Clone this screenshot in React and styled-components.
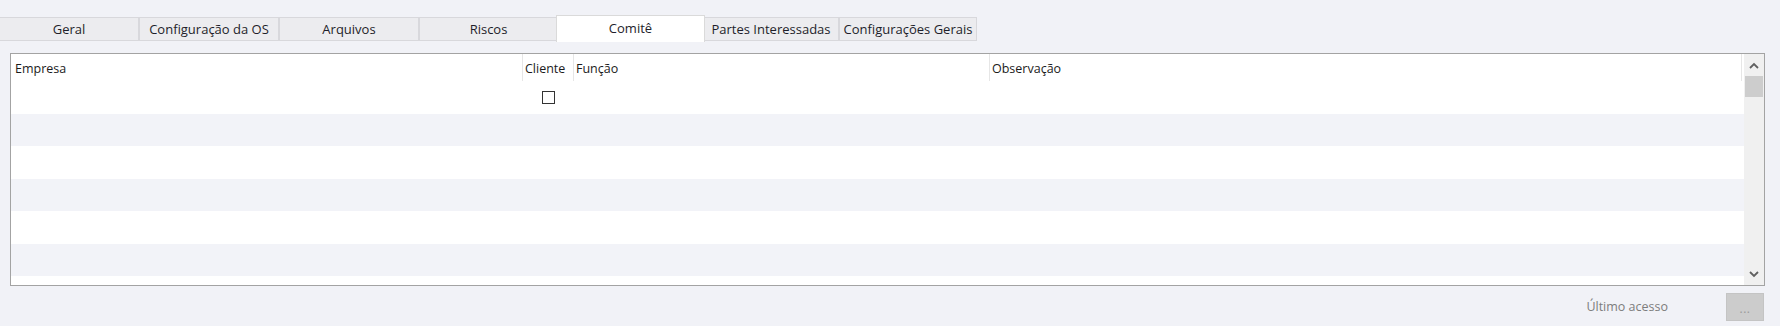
import styled, { createGlobalStyle } from "styled-components";

const GlobalStyle = createGlobalStyle`
	body {
		margin: 0;
		background: #f1f2f7;
		font-family: "Open Sans", "Noto Sans", sans-serif;
	}
`;

const Screen = styled.div`
	width: 1780px;
	height: 326px;
	display: flex;
	flex-direction: column;
	background: #f1f2f7;
	overflow: hidden;
`;

const TabStrip = styled.div`
	display: flex;
	align-items: flex-end;
	height: 41px;
	position: relative;
	z-index: 1;
`;

const Tab = styled.div`
	box-sizing: border-box;
	width: ${(p) => p.$width}px;
	height: ${(p) => (p.$active ? "27px" : "24px")};
	margin-bottom: ${(p) => (p.$active ? "-1px" : "0")};
	margin-left: ${(p) => (p.$active ? "-2px" : "0")};
	margin-right: ${(p) => (p.$active ? "-2px" : "0")};
	display: flex;
	align-items: center;
	justify-content: center;
	padding-bottom: ${(p) => (p.$active ? "3px" : "0")};
	background: ${(p) => (p.$active ? "#ffffff" : "#ececef")};
	border: 1px solid ${(p) => (p.$active ? "#dadada" : "#d8d8dc")};
	border-bottom: ${(p) => (p.$active ? "none" : "1px solid #d8d8dc")};
	border-left: ${(p) => (p.$first ? "none" : undefined)};
	font-size: 13px;
	color: #1e1e2a;
	white-space: nowrap;
	position: relative;
	z-index: ${(p) => (p.$active ? 2 : 1)};
`;

const TabPage = styled.div`
	flex: 1;
	display: flex;
	flex-direction: column;
	padding: 12px 15px 0 10px;
`;

const Grid = styled.div`
	box-sizing: border-box;
	height: 233px;
	display: flex;
	border: 1px solid #a3a3a3;
	background: #ffffff;
`;

const GridBody = styled.div`
	flex: 1;
	display: flex;
	flex-direction: column;
	overflow: hidden;
`;

const Columns = "511px 51px 416px 1fr";

const HeaderRow = styled.div`
	display: grid;
	grid-template-columns: ${Columns};
	height: 27px;
	flex-shrink: 0;
	background: #ffffff;
`;

const HeaderCell = styled.div`
	display: flex;
	align-items: center;
	padding-left: ${(p) => (p.$first ? "4px" : "2px")};
	padding-top: 2px;
	font-size: 12.5px;
	color: #1b1b1b;
	white-space: nowrap;
	border-left: ${(p) => (p.$first ? "none" : "1px solid #e6e6e6")};
	border-right: ${(p) => (p.$last ? "1px solid #e6e6e6" : "none")};
	margin-right: ${(p) => (p.$last ? "2px" : "0")};
`;

const Row = styled.div`
	display: grid;
	grid-template-columns: ${Columns};
	height: 32.5px;
	flex-shrink: 0;
	background: ${(p) => (p.$alt ? "#f2f3f8" : "#ffffff")};
`;

const Cell = styled.div`
	display: flex;
	align-items: center;
	justify-content: ${(p) => (p.$center ? "center" : "flex-start")};
`;

const CheckBox = styled.div`
	box-sizing: border-box;
	width: 13px;
	height: 13px;
	border: 1px solid #333333;
	background: #ffffff;
	margin-left: 1px;
`;

const ScrollBar = styled.div`
	width: 20px;
	flex-shrink: 0;
	display: flex;
	flex-direction: column;
	background: #f0f0f0;
`;

const ScrollArrow = styled.div`
	height: 22px;
	display: flex;
	align-items: center;
	justify-content: center;
	color: #606060;
	flex-shrink: 0;
`;

const ScrollTrack = styled.div`
	flex: 1;
	display: flex;
	flex-direction: column;
`;

const Thumb = styled.div`
	height: 21px;
	margin: 0 1px;
	background: #cdcdcd;
`;

const Footer = styled.div`
	display: flex;
	align-items: center;
	justify-content: flex-end;
	gap: 58px;
	height: 40px;
	padding-right: 1px;
`;

const FooterLabel = styled.span`
	font-size: 12.5px;
	color: #7d7d7d;
`;

const DotsButton = styled.button`
	box-sizing: border-box;
	width: 38px;
	height: 28px;
	margin-top: 1px;
	border: 1px solid #c4c4c4;
	background: #cccccc;
	color: #9a9a9a;
	font-family: "Open Sans", sans-serif;
	font-size: 12px;
	padding: 4px 0 0;
	line-height: 1;
	letter-spacing: 0.5px;
`;

const tabs = [
	{ label: "Geral", width: 139 },
	{ label: "Configuração da OS", width: 140 },
	{ label: "Arquivos", width: 140 },
	{ label: "Riscos", width: 139 },
	{ label: "Comitê", width: 149, active: true },
	{ label: "Partes Interessadas", width: 136 },
	{ label: "Configurações Gerais", width: 138 },
];

function Chevron({ up }) {
	return (
		<svg width="10" height="7" viewBox="0 0 10 7">
			<path
				d={up ? "M1 6 L5 2 L9 6" : "M1 1 L5 5 L9 1"}
				fill="none"
				stroke="currentColor"
				strokeWidth="1.8"
			/>
		</svg>
	);
}

export default function App() {
	const rows = [0, 1, 2, 3, 4, 5, 6];

	return (
		<Screen>
			<GlobalStyle />
			<TabStrip>
				{tabs.map((t, i) => (
					<Tab key={t.label} $width={t.width} $active={t.active} $first={i === 0}>
						{t.label}
					</Tab>
				))}
			</TabStrip>
			<TabPage>
				<Grid>
					<GridBody>
						<HeaderRow>
							<HeaderCell $first>Empresa</HeaderCell>
							<HeaderCell>Cliente</HeaderCell>
							<HeaderCell>Função</HeaderCell>
							<HeaderCell $last>Observação</HeaderCell>
						</HeaderRow>
						{rows.map((r) => (
							<Row key={r} $alt={r % 2 === 1}>
								<Cell />
								<Cell $center>{r === 0 && <CheckBox />}</Cell>
								<Cell />
								<Cell />
							</Row>
						))}
					</GridBody>
					<ScrollBar>
						<ScrollArrow>
							<Chevron up />
						</ScrollArrow>
						<ScrollTrack>
							<Thumb />
						</ScrollTrack>
						<ScrollArrow>
							<Chevron />
						</ScrollArrow>
					</ScrollBar>
				</Grid>
				<Footer>
					<FooterLabel>Último acesso</FooterLabel>
					<DotsButton>...</DotsButton>
				</Footer>
			</TabPage>
		</Screen>
	);
}
